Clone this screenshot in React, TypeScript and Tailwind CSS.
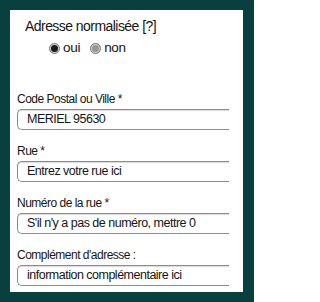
const fields = [
  { label: "Code Postal ou Ville *", value: "MERIEL 95630" },
  { label: "Rue *", value: "Entrez votre rue ici" },
  { label: "Numéro de la rue *", value: "S'il n'y a pas de numéro, mettre 0" },
  { label: "Complément d'adresse :", value: "information complémentaire ici" },
];

function Radio({ checked }: { checked: boolean }) {
  return (
    <span className="flex h-[11px] w-[11px] items-center justify-center rounded-full border border-[#7a7a7a] bg-[#cfcfcf]">
      <span
        className={
          checked
            ? "h-[7px] w-[7px] rounded-full bg-[#1a1a1a]"
            : "h-[7px] w-[7px] rounded-full bg-[#989898]"
        }
      />
    </span>
  );
}

export default function App() {
  return (
    <div
      className="h-[302px] w-[254px] bg-[#07403f] p-[10px] text-[#151515]"
      style={{ fontFamily: '"Liberation Sans", Arial, sans-serif' }}
    >
      <div className="flex h-[282px] w-[233px] flex-col bg-white">
        <div className="mt-[8px] pl-[15px] text-[14px] leading-[16px] tracking-[-0.55px]">
          Adresse normalisée [?]
        </div>
        <div className="mt-[6px] flex items-center pl-[39px] text-[13.5px] leading-[16px] tracking-[-0.3px]">
          <Radio checked />
          <span className="ml-[3px]">oui</span>
          <span className="ml-[10px]">
            <Radio checked={false} />
          </span>
          <span className="ml-[3px]">non</span>
        </div>
        <div className="mt-[36px] flex flex-col pl-[7px]">
          {fields.map((f) => (
            <div key={f.label} className="mb-[14px] flex flex-col">
              <div className="text-[12px] leading-[14px] tracking-[-0.5px]">
                {f.label}
              </div>
              <div className="mt-[3px] flex h-[21px] w-[212px] items-center rounded-l-[5px] border border-r-0 border-[#8c8c8c] pl-[9px] text-[12.5px] tracking-[-0.5px] shadow-[inset_0_1px_1px_rgba(0,0,0,0.15)]">
                {f.value}
              </div>
            </div>
          ))}
        </div>
      </div>
    </div>
  );
}
